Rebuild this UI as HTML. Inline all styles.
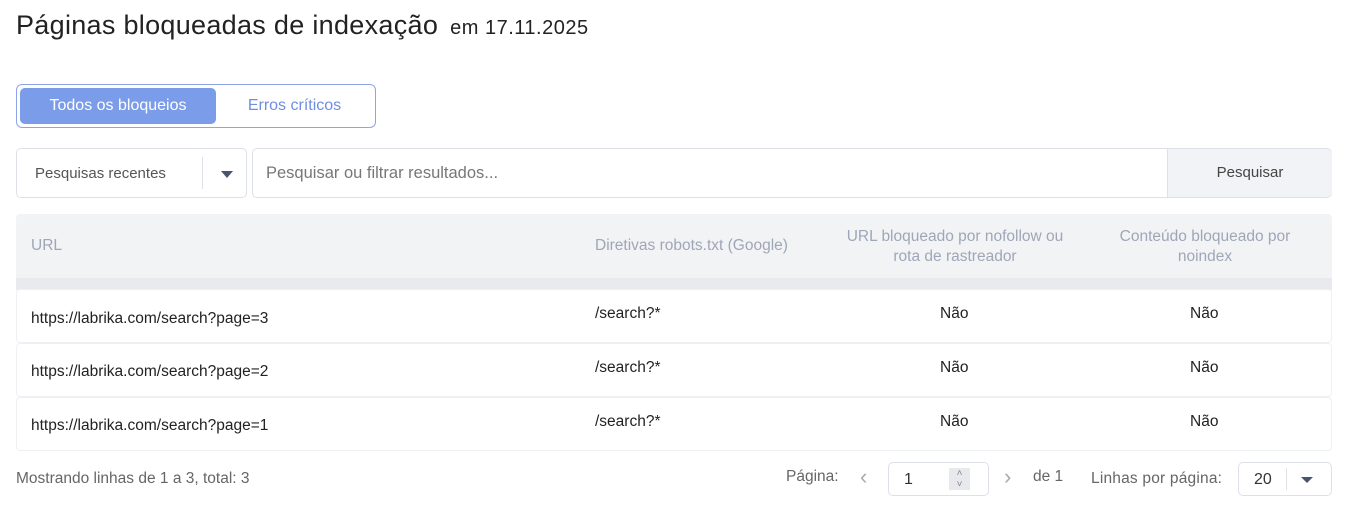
<!DOCTYPE html>
<html><head><meta charset="utf-8"><style>
*{box-sizing:border-box;margin:0;padding:0}
body{width:1348px;height:520px;background:#fff;font-family:"Liberation Sans",sans-serif;color:#333;position:relative;overflow:hidden}
.a{position:absolute}
h1{position:absolute;left:16px;top:10px;font-size:27px;font-weight:normal;color:#222;letter-spacing:0.3px;white-space:nowrap}
h1 span{font-size:20px;margin-left:12px;letter-spacing:0.5px}
.tabs{left:16px;top:84px;width:360px;height:44px;border:1px solid #8ea4e8;border-radius:6px}
.t1{left:3px;top:3px;width:196px;height:36px;background:#7b9ce9;border-radius:5px;color:#fff;font-size:16px;text-align:center;line-height:36px}
.t2{left:199px;top:3px;width:157px;height:36px;color:#6f8ee0;font-size:16px;text-align:center;line-height:36px}
.box{border:1px solid #dde0e6;border-radius:5px}
.th{color:#9ea6b8;font-size:15.5px}
.row{left:16px;width:1316px;height:54px;border:1px solid #eef0f4;border-radius:4px;font-size:15.5px;color:#222}
.row div{position:absolute;top:0;line-height:54px}
</style></head><body>
<h1>Páginas bloqueadas de indexação<span>em 17.11.2025</span></h1>
<div class="a tabs"><div class="a t1">Todos os bloqueios</div><div class="a t2">Erros críticos</div></div>
<div class="a box" style="left:16px;top:148px;width:231px;height:50px">
<div class="a" style="left:18px;top:16px;font-size:15px;color:#555">Pesquisas recentes</div>
<div class="a" style="left:185px;top:8px;width:1px;height:32px;background:#dde0e6"></div>
<div class="a" style="left:204px;top:22px;border-left:6px solid transparent;border-right:6px solid transparent;border-top:7px solid #4a5470"></div>
</div>
<div class="a box" style="left:252px;top:148px;width:1080px;height:50px">
<div class="a" style="left:13px;top:15px;font-size:16.5px;color:#777">Pesquisar ou filtrar resultados...</div>
<div class="a" style="left:914px;top:0;width:165px;height:48px;background:#f2f3f6;border-left:1px solid #dde0e6;border-radius:0 5px 5px 0;text-align:center;line-height:48px;font-size:15px;color:#444">Pesquisar</div>
</div>
<div class="a" style="left:16px;top:214px;width:1316px;height:76px;background:#f2f3f5;border-radius:4px 4px 0 0"></div>
<div class="a" style="left:16px;top:278px;width:1316px;height:12px;background:#e9eaee"></div>
<div class="a th" style="left:31px;top:237px">URL</div>
<div class="a th" style="left:595px;top:237px">Diretivas robots.txt (Google)</div>
<div class="a th" style="left:840px;top:227px;width:230px;text-align:center;line-height:20px">URL bloqueado por nofollow ou rota de rastreador</div>
<div class="a th" style="left:1095px;top:227px;width:220px;text-align:center;line-height:20px">Conteúdo bloqueado por noindex</div>
<div class="a row" style="top:289px"><div style="left:14px;top:2px">https://labrika.com/search?page=3</div><div style="left:578px;top:-3px">/search?*</div><div style="left:923px;top:-3px">Não</div><div style="left:1173px;top:-3px">Não</div></div>
<div class="a row" style="top:343px"><div style="left:14px;top:1px">https://labrika.com/search?page=2</div><div style="left:578px;top:-3px">/search?*</div><div style="left:923px;top:-3px">Não</div><div style="left:1173px;top:-3px">Não</div></div>
<div class="a row" style="top:397px"><div style="left:14px;top:1px">https://labrika.com/search?page=1</div><div style="left:578px;top:-3px">/search?*</div><div style="left:923px;top:-3px">Não</div><div style="left:1173px;top:-3px">Não</div></div>
<div class="a" style="left:16px;top:470px;font-size:15.5px;color:#666">Mostrando linhas de 1 a 3, total: 3</div>
<div class="a" style="left:786px;top:468px;font-size:15.5px;color:#666">Página:</div>
<div class="a" style="left:860px;top:464px;font-size:22px;color:#aaa">‹</div>
<div class="a box" style="left:888px;top:462px;width:101px;height:34px"><div class="a" style="left:15px;top:8px;font-size:16px;color:#333">1</div><div class="a" style="left:60px;top:5px;width:21px;height:22px;background:#e8e9ed;font-size:10px;color:#888;text-align:center;line-height:11px">˄<br>˅</div></div>
<div class="a" style="left:1004px;top:464px;font-size:22px;color:#aaa">›</div>
<div class="a" style="left:1033px;top:468px;font-size:15.5px;color:#666">de 1</div>
<div class="a" style="left:1091px;top:470px;font-size:15.5px;color:#666;letter-spacing:0.2px">Linhas por página:</div>
<div class="a box" style="left:1238px;top:462px;width:94px;height:34px"><div class="a" style="left:15px;top:8px;font-size:16px;color:#333">20</div><div class="a" style="left:47px;top:5px;width:1px;height:22px;background:#e0e2e6"></div><div class="a" style="left:62px;top:14px;border-left:6px solid transparent;border-right:6px solid transparent;border-top:6px solid #4a5470"></div></div>
</body></html>
